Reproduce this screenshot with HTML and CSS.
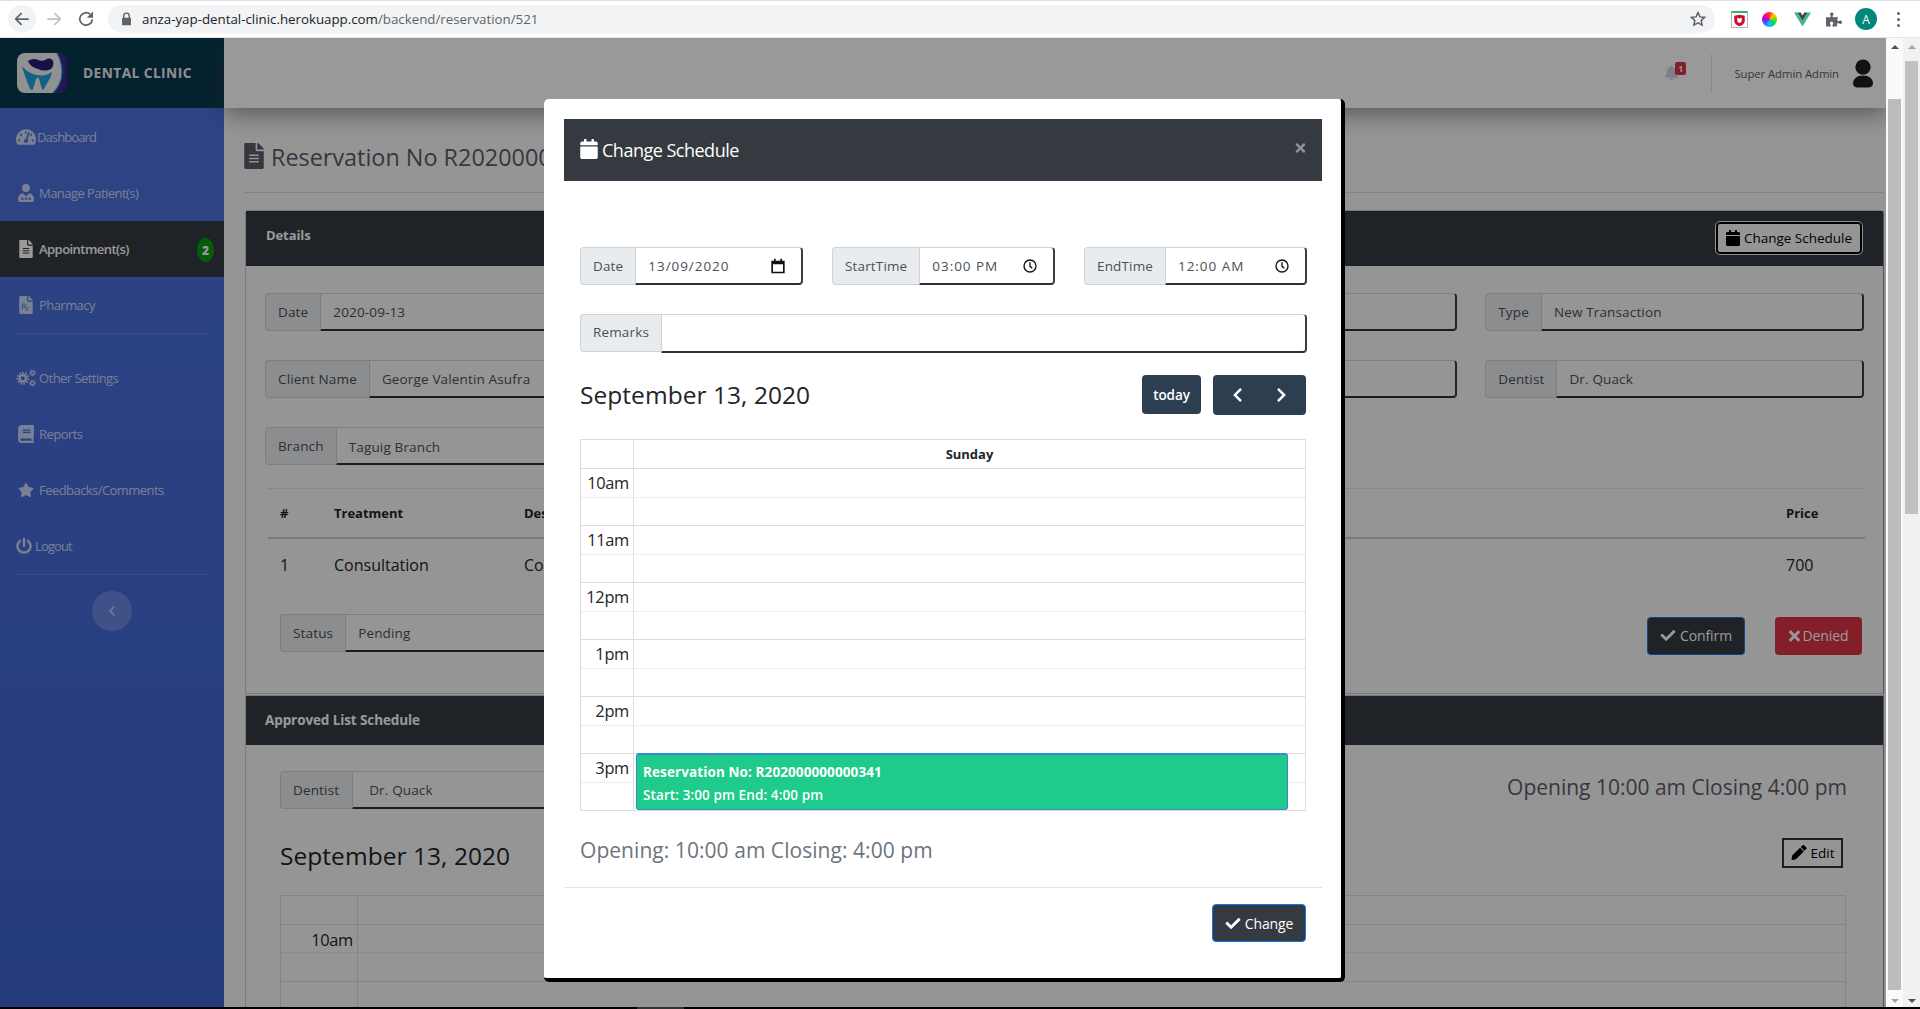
FILE: index.html
```html
<!DOCTYPE html>
<html lang="en">
<head>
<meta charset="utf-8">
<title>Reservation</title>
<link rel="stylesheet" href="styles.css">
</head>
<body>
<svg class="sprite" aria-hidden="true">
  <symbol id="i-check" viewBox="0 0 512 512"><path d="M173.898 439.404l-166.4-166.4c-9.997-9.997-9.997-26.206 0-36.204l36.203-36.204c9.997-9.998 26.207-9.998 36.204 0L192 312.69 432.095 72.596c9.997-9.997 26.207-9.997 36.204 0l36.203 36.204c9.997 9.997 9.997 26.206 0 36.204l-294.4 294.401c-9.998 9.997-26.207 9.997-36.204-.001z"/></symbol>
  <symbol id="i-times" viewBox="0 0 352 512"><path d="M242.72 256l100.07-100.07c12.28-12.28 12.28-32.19 0-44.48l-22.24-22.24c-12.28-12.28-32.19-12.28-44.48 0L176 189.28 75.93 89.21c-12.28-12.28-32.19-12.28-44.48 0L9.21 111.45c-12.28 12.28-12.28 32.19 0 44.48L109.28 256 9.21 356.07c-12.28 12.28-12.28 32.19 0 44.48l22.24 22.24c12.28 12.28 32.2 12.28 44.48 0L176 322.72l100.07 100.07c12.28 12.28 32.2 12.28 44.48 0l22.24-22.24c12.28-12.28 12.28-32.19 0-44.48L242.72 256z"/></symbol>
  <symbol id="i-calendar" viewBox="0 0 448 512"><path d="M12 192h424c6.6 0 12 5.4 12 12v260c0 26.5-21.5 48-48 48H48c-26.5 0-48-21.5-48-48V204c0-6.6 5.4-12 12-12zm436-44v-36c0-26.5-21.5-48-48-48h-48V12c0-6.6-5.4-12-12-12h-40c-6.6 0-12 5.4-12 12v52H160V12c0-6.6-5.4-12-12-12h-40c-6.6 0-12 5.4-12 12v52H48C21.5 64 0 85.5 0 112v36c0 6.6 5.4 12 12 12h424c6.6 0 12-5.4 12-12z"/></symbol>
  <symbol id="i-file" viewBox="0 0 384 512"><path d="M224 136V0H24C10.7 0 0 10.7 0 24v464c0 13.3 10.7 24 24 24h336c13.3 0 24-10.7 24-24V160H248c-13.2 0-24-10.8-24-24zm64 236c0 6.6-5.4 12-12 12H108c-6.6 0-12-5.4-12-12v-8c0-6.6 5.4-12 12-12h168c6.6 0 12 5.4 12 12v8zm0-64c0 6.6-5.4 12-12 12H108c-6.6 0-12-5.4-12-12v-8c0-6.6 5.4-12 12-12h168c6.6 0 12 5.4 12 12v8zm0-72v8c0 6.6-5.4 12-12 12H108c-6.6 0-12-5.4-12-12v-8c0-6.6 5.4-12 12-12h168c6.6 0 12 5.4 12 12zm96-114.1v6.1H256V0h6.1c6.4 0 12.5 2.5 17 7l97.9 98c4.5 4.5 7 10.6 7 16.9z"/></symbol>
  <symbol id="i-rx" viewBox="0 0 384 512"><path d="M224 136V0H24C10.7 0 0 10.7 0 24v464c0 13.3 10.7 24 24 24h336c13.3 0 24-10.7 24-24V160H248c-13.2 0-24-10.8-24-24zm160-14.1v6.1H256V0h6.1c6.4 0 12.5 2.5 17 7l97.9 98c4.5 4.5 7 10.6 7 16.9z"/><path class="rx-mark" d="M90 230h70a38 38 0 0 1 0 76h-70zm0 76v74m50-74l110 120m-50-46l60-70"/></symbol>
  <symbol id="i-star" viewBox="0 0 576 512"><path d="M259.3 17.8L194 150.2 47.9 171.5c-26.2 3.8-36.7 36.1-17.7 54.6l105.7 103-25 145.5c-4.5 26.3 23.2 46 46.4 33.7L288 439.6l130.7 68.7c23.2 12.2 50.9-7.4 46.4-33.7l-25-145.5 105.7-103c19-18.5 8.5-50.8-17.7-54.6L382 150.2 316.7 17.8c-11.7-23.6-45.6-23.9-57.4 0z"/></symbol>
  <symbol id="i-power" viewBox="0 0 512 512"><path d="M400 54.1c63 45 104 118.6 104 201.9 0 136.8-110.8 247.7-247.5 248C120 504.3 8.2 393 8 256.4 7.9 173.1 48.9 99.3 111.8 54.2c11.7-8.3 28-4.8 35 7.7L162.6 90c5.9 10.5 3.1 23.8-6.6 31-41.5 30.8-68 79.6-68 134.9-.1 92.3 74.5 168.1 168 168.1 91.6 0 168.6-74.2 168-169.1-.3-51.8-24.7-101.8-68.1-134-9.7-7.2-12.4-20.5-6.5-30.9l15.8-28.1c7-12.4 23.2-16.1 34.8-7.8zM296 264V24c0-13.3-10.7-24-24-24h-32c-13.3 0-24 10.7-24 24v240c0 13.3 10.7 24 24 24h32c13.3 0 24-10.7 24-24z"/></symbol>
  <symbol id="i-pencil" viewBox="0 0 512 512"><path d="M497.9 142.1l-46.1 46.1c-4.7 4.7-12.3 4.7-17 0l-111-111c-4.7-4.7-4.7-12.3 0-17l46.1-46.1c18.7-18.7 49.1-18.7 67.9 0l60.1 60.1c18.8 18.7 18.8 49.1 0 67.9zM284.2 99.8L21.6 362.4.4 483.9c-2.9 16.4 11.4 30.6 27.8 27.8l121.5-21.3 262.6-262.6c4.7-4.7 4.7-12.3 0-17l-111-111c-4.8-4.7-12.4-4.7-17.1 0z"/></symbol>
  <symbol id="i-bell" viewBox="0 0 448 512"><path d="M224 512c35.32 0 63.97-28.65 63.97-64H160.03c0 35.35 28.65 64 63.97 64zm215.39-149.71c-19.32-20.76-55.47-51.99-55.47-154.29 0-77.7-54.48-139.9-127.94-155.16V32c0-17.67-14.32-32-31.98-32s-31.98 14.33-31.98 32v20.84C118.56 68.1 64.08 130.3 64.08 208c0 102.3-36.15 133.53-55.47 154.29-6 6.45-8.66 14.16-8.61 21.71.11 16.4 12.98 32 32.1 32h383.8c19.12 0 32-15.6 32.1-32 .05-7.55-2.61-15.26-8.61-21.71z"/></symbol>
  <symbol id="i-left" viewBox="0 0 320 512"><path d="M34.52 239.03L228.87 44.69c9.37-9.37 24.57-9.37 33.94 0l22.67 22.67c9.36 9.36 9.37 24.52.04 33.9L131.49 256l154.02 154.75c9.34 9.38 9.32 24.54-.04 33.9l-22.67 22.67c-9.37 9.37-24.57 9.37-33.94 0L34.52 272.97c-9.37-9.37-9.37-24.57 0-33.94z"/></symbol>
  <symbol id="i-right" viewBox="0 0 320 512"><path d="M285.476 272.971L91.132 467.314c-9.373 9.373-24.569 9.373-33.941 0l-22.667-22.667c-9.357-9.357-9.375-24.522-.04-33.901L188.505 256 34.484 101.255c-9.335-9.379-9.317-24.544.04-33.901l22.667-22.667c9.373-9.373 24.569-9.373 33.941 0L285.475 239.03c9.373 9.372 9.373 24.568.001 33.941z"/></symbol>
  <symbol id="i-book" viewBox="0 0 448 512"><path d="M448 360V24c0-13.3-10.7-24-24-24H96C43 0 0 43 0 96v320c0 53 43 96 96 96h328c13.3 0 24-10.7 24-24v-16c0-7.5-3.5-14.3-8.9-18.7-4.2-15.4-4.2-59.3 0-74.7 5.4-4.3 8.9-11.1 8.9-18.6zM128 134c0-3.3 2.7-6 6-6h212c3.3 0 6 2.7 6 6v20c0 3.3-2.7 6-6 6H134c-3.3 0-6-2.7-6-6v-20zm0 64c0-3.3 2.7-6 6-6h212c3.3 0 6 2.7 6 6v20c0 3.3-2.7 6-6 6H134c-3.3 0-6-2.7-6-6v-20zm253.4 250H96c-17.7 0-32-14.3-32-32 0-17.6 14.4-32 32-32h285.4c-1.9 17.1-1.9 46.9 0 64z"/></symbol>
  <symbol id="i-gauge" viewBox="0 0 576 512"><path d="M288 32C128.94 32 0 160.94 0 320c0 52.8 14.25 102.26 39.06 144.8 5.61 9.62 16.3 15.2 27.44 15.2h443c11.14 0 21.83-5.58 27.44-15.2C561.75 422.26 576 372.8 576 320c0-159.06-128.94-288-288-288zm0 64c14.71 0 26.58 10.13 30.32 23.65-1.11 2.26-2.64 4.23-3.45 6.67l-9.22 27.67c-5.13 3.49-10.97 6.01-17.64 6.01-17.67 0-32-14.33-32-32S270.33 96 288 96zM96 384c-17.67 0-32-14.33-32-32s14.33-32 32-32 32 14.33 32 32-14.33 32-32 32zm48-160c-17.67 0-32-14.33-32-32s14.33-32 32-32 32 14.33 32 32-14.33 32-32 32zm246.77-72.41l-61.33 184C343.13 347.33 352 364.54 352 384c0 11.72-3.38 22.55-8.88 32H232.88c-5.5-9.45-8.88-20.28-8.88-32 0-33.94 26.5-61.43 59.9-63.59l61.34-184.01c4.17-12.56 17.73-19.45 30.36-15.17 12.57 4.19 19.35 17.79 15.17 30.36zm14.66 57.2l15.52-46.55c3.47-1.29 7.13-2.23 11.05-2.23 17.67 0 32 14.33 32 32s-14.33 32-32 32c-11.38-.01-20.89-6.28-26.57-15.22zM480 384c-17.67 0-32-14.33-32-32s14.33-32 32-32 32 14.33 32 32-14.33 32-32 32z"/></symbol>
  <symbol id="i-doctor" viewBox="0 0 448 512"><circle cx="224" cy="112" r="112"/><path d="M40 512c-22 0-40-18-40-40v-60c0-80 60-136 130-146l94 80 94-80c70 10 130 66 130 146v60c0 22-18 40-40 40z"/><circle class="cut" cx="120" cy="420" r="34"/><circle class="cut" cx="224" cy="420" r="34"/><circle class="cut" cx="328" cy="420" r="34"/></symbol>
  <symbol id="i-cogs" viewBox="0 0 600 512"><circle class="gear-teeth" cx="205" cy="265" r="165"/><circle class="gear-body" cx="205" cy="265" r="97.500"/><circle class="gear-teeth-s" cx="495" cy="105" r="82"/><circle class="gear-body-s" cx="495" cy="105" r="49"/><circle class="gear-teeth-s" cx="495" cy="410" r="82"/><circle class="gear-body-s" cx="495" cy="410" r="49"/></symbol>
  <symbol id="i-puzzle" viewBox="0 0 576 512"><path d="M519.442 288.651c-41.519 0-59.5 31.593-82.058 31.593C377.409 320.244 432 144 432 144s-196.288 80-196.288-3.297c0-35.827 36.288-46.25 36.288-85.985C272 19.216 243.885 0 210.539 0c-34.654 0-66.366 18.891-66.366 56.346 0 41.364 31.711 59.277 31.711 81.75C175.885 207.719 0 166.758 0 166.758v333.237s178.635 41.047 178.635-28.662c0-22.473-40-40.107-40-81.471 0-37.456 29.25-56.346 63.577-56.346 33.673 0 61.788 19.216 61.788 54.717 0 39.735-36.288 50.158-36.288 85.985 0 60.803 129.675 25.73 181.23 25.73 0 0-34.725-120.101 25.827-120.101 35.962 0 46.423 36.152 86.308 36.152C556.712 416 576 387.99 576 354.443c0-34.199-18.962-65.792-56.558-65.792z"/></symbol>
  <symbol id="i-user" viewBox="0 0 60 84"><ellipse cx="30" cy="23" rx="23" ry="23"/><path d="M0 72c0-14 12-24 30-24s30 10 30 24c0 8-7 12-14 12H14C7 84 0 80 0 72z"/></symbol>
  <symbol id="i-clock" viewBox="0 0 24 24"><circle class="line" cx="12" cy="12" r="9"/><path class="line" d="M12 6.500V12.500l3.500 3"/></symbol>
  <symbol id="i-cal-outline" viewBox="0 0 24 24"><path d="M6 1h2.500v3h7V1H18v3h4v19H2V4h4zM4.500 9.500v11h15v-11z"/></symbol>
</svg>

<header class="browser">
  <div class="nav-buttons">
    <span class="round-btn hover">
      <svg class="chrome-ico" viewBox="0 0 24 24"><path class="chrome-line" d="M20 12H5m6.500-7L4.500 12l7 7"/></svg>
    </span>
    <span class="round-btn">
      <svg class="chrome-ico faded" viewBox="0 0 24 24"><path class="chrome-line" d="M4 12h15m-6.500-7l7 7-7 7"/></svg>
    </span>
    <span class="round-btn">
      <svg class="chrome-ico" viewBox="0 0 24 24"><path class="chrome-line" d="M19.500 12.500A7.500 7.500 0 1 1 17 6.300"/><path class="chrome-fill" d="M20.500 3v7.500H13z"/></svg>
    </span>
  </div>
  <div class="address">
    <svg class="lock" viewBox="0 0 16 20"><path d="M3 8V5.500a5 5 0 0 1 10 0V8h1.500v11h-13V8zm2 0h6V5.500a3 3 0 0 0-6 0z"/></svg>
    <span class="url">anza-yap-dental-clinic.herokuapp.com<span class="url-path">/backend/reservation/521</span></span>
    <svg class="bookmark" viewBox="0 0 24 24"><path d="M12 3.500l2.600 5.700 6.200.7-4.600 4.200 1.300 6.100L12 17.200l-5.500 3 1.300-6.100L3.200 9.900l6.200-.7z"/></svg>
  </div>
  <div class="extensions">
    <span class="ext-shield"><svg viewBox="0 0 16 16"><path class="mcafee" d="M2 3l6-1 6 1v6c0 3-3 5-6 6-3-1-6-3-6-6z"/><path class="mcafee-in" d="M5.500 5v4c0 1 1.500 2 2.500 2.500 1-.5 2.500-1.500 2.500-2.500V5l-2.500 1.500z"/></svg></span>
    <span class="ext-wheel"></span>
    <svg class="ext-vue" viewBox="0 0 24 20"><path class="vue-green" d="M0 0h5l7 12L19 0h5L12 20z"/><path class="vue-navy" d="M5 0h4.500L12 4.500 14.500 0H19l-7 12z"/></svg>
    <svg class="ext-puzzle"><use href="#i-puzzle"/></svg>
    <span class="avatar">A</span>
    <span class="dots"><i></i><i></i><i></i></span>
  </div>
</header>

<div class="viewport">
  <div class="page">
    <aside class="sidebar">
      <div class="brand">
        <svg class="logo" viewBox="0 0 50 40">
          <rect class="logo-bg" width="48" height="40" rx="8"/>
          <path class="logo-edge" d="M42 0a8 8 0 0 1 8 8v24a8 8 0 0 1-8 8h-6c6-6 9-14 9-21 0-7-2-14-5-19z"/>
          <path class="logo-arc" d="M40 0c4 7 5 12 5 19 0 7-3 15-9 21"/>
          <path class="logo-navy" d="M11 8c3-2 7-3 10-1 3 1 6 1 9-1 3-1 5 0 6 2 1 3 0 6-2 8-5 2-9 2-13 0-4-1-8-3-10-8z"/>
          <path class="logo-blue" d="M5 13c4 5 9 8 15 9 6 1 11 0 15-3-1 6-4 9-8 17-1 1-2 1-2 0l-3-10c-1-2-2-2-3 0l-3 10c0 1-2 1-3 0-3-8-6-15-8-23z"/>
        </svg>
        <span class="brand-name">DENTAL CLINIC</span>
      </div>
      <nav class="nav">
        <a class="nav-item tight"><svg class="nav-ico wide"><use href="#i-gauge"/></svg><span>Dashboard</span></a>
        <a class="nav-item"><svg class="nav-ico"><use href="#i-doctor"/></svg><span>Manage Patient(s)</span></a>
        <a class="nav-item active"><svg class="nav-ico"><use href="#i-file"/></svg><span>Appointment(s)</span><b class="count">2</b></a>
        <a class="nav-item"><svg class="nav-ico"><use href="#i-rx"/></svg><span>Pharmacy</span></a>
        <hr class="nav-rule nav-rule-gap">
        <a class="nav-item"><svg class="nav-ico wide"><use href="#i-cogs"/></svg><span>Other Settings</span></a>
        <a class="nav-item"><svg class="nav-ico"><use href="#i-book"/></svg><span>Reports</span></a>
        <a class="nav-item"><svg class="nav-ico"><use href="#i-star"/></svg><span>Feedbacks/Comments</span></a>
        <a class="nav-item tight logout"><svg class="nav-ico"><use href="#i-power"/></svg><span>Logout</span></a>
        <hr class="nav-rule">
        <button class="collapse"><svg class="collapse-ico"><use href="#i-left"/></svg></button>
      </nav>
    </aside>

    <div class="main">
      <div class="topbar">
        <span class="bell"><svg class="bell-ico"><use href="#i-bell"/></svg><b class="bell-badge">1</b></span>
        <span class="top-divider"></span>
        <span class="user-name">Super Admin Admin</span>
        <svg class="user-ico"><use href="#i-user"/></svg>
      </div>
      <div class="content">
        <div class="page-title">
          <svg class="title-ico"><use href="#i-file"/></svg>
          <h1>Reservation No R2020000</h1>
        </div>

        <section class="card">
          <div class="card-head">
            <strong>Details</strong>
            <button class="btn-outline"><svg class="ico-md"><use href="#i-calendar"/></svg>Change Schedule</button>
          </div>
          <div class="details-body">
            <div class="field-grid">
              <div class="group span-2"><span class="addon">Date</span><span class="value">2020-09-13</span></div>
              <div class="group"><span class="addon">Time</span><span class="value"></span></div>
              <div class="group"><span class="addon">Type</span><span class="value">New Transaction</span></div>
              <div class="group span-2"><span class="addon">Client Name</span><span class="value">George Valentin Asufra</span></div>
              <div class="group"><span class="addon">Email</span><span class="value"></span></div>
              <div class="group"><span class="addon">Dentist</span><span class="value">Dr. Quack</span></div>
              <div class="group span-2"><span class="addon">Branch</span><span class="value low">Taguig Branch</span></div>
            </div>
            <table class="items">
              <thead><tr><th class="c-num">#</th><th class="c-treat">Treatment</th><th class="c-desc">Description</th><th class="c-price">Price</th></tr></thead>
              <tbody><tr><td>1</td><td>Consultation</td><td>Consultation</td><td>700</td></tr></tbody>
            </table>
            <div class="status-row">
              <div class="group status-group"><span class="addon">Status</span><span class="value low">Pending</span></div>
              <div class="actions">
                <button class="btn btn-dark"><svg class="ico-sm"><use href="#i-check"/></svg>Confirm</button>
                <button class="btn btn-danger"><svg class="ico-x"><use href="#i-times"/></svg>Denied</button>
              </div>
            </div>
          </div>
        </section>

        <section class="card card-second">
          <div class="card-head card-head-short"><strong>Approved List Schedule</strong></div>
          <div class="approved-body">
            <div class="approved-top">
              <div class="group status-group dentist-group"><span class="addon">Dentist</span><span class="value low">Dr. Quack</span></div>
              <span class="hours">Opening 10:00 am Closing 4:00 pm</span>
            </div>
            <div class="approved-title">
              <h2 class="cal-title">September 13, 2020</h2>
              <button class="btn-edit"><svg class="ico-sm"><use href="#i-pencil"/></svg>Edit</button>
            </div>
            <div class="cal cal-wide">
              <div class="cal-head"><span class="axis"></span><span class="lane"></span></div>
              <div class="slot major"><span class="axis">10am</span><span class="lane"></span></div>
              <div class="slot"><span class="axis"></span><span class="lane"></span></div>
              <div class="slot major"><span class="axis"></span><span class="lane"></span></div>
            </div>
          </div>
        </section>
      </div>
    </div>

    <div class="backdrop"></div>

    <div class="modal">
      <div class="modal-head">
        <svg class="modal-cal"><use href="#i-calendar"/></svg>
        <h3>Change Schedule</h3>
        <svg class="modal-close"><use href="#i-times"/></svg>
      </div>
      <div class="modal-body">
        <div class="time-row">
          <div class="group"><span class="addon">Date</span><span class="value light picker">13/09/2020<svg class="picker-ico"><use href="#i-cal-outline"/></svg></span></div>
          <div class="group"><span class="addon">StartTime</span><span class="value light picker">03:00 PM<svg class="picker-ico"><use href="#i-clock"/></svg></span></div>
          <div class="group"><span class="addon">EndTime</span><span class="value light picker">12:00 AM<svg class="picker-ico"><use href="#i-clock"/></svg></span></div>
        </div>
        <div class="group remarks"><span class="addon">Remarks</span><span class="value light"></span></div>
        <div class="cal-toolbar">
          <h2 class="cal-title">September 13, 2020</h2>
          <div class="cal-buttons">
            <button class="fc-btn fc-today">today</button>
            <div class="fc-pair">
              <svg class="fc-chev"><use href="#i-left"/></svg>
              <svg class="fc-chev"><use href="#i-right"/></svg>
            </div>
          </div>
        </div>
        <div class="cal cal-modal">
          <div class="cal-head"><span class="axis"></span><span class="lane">Sunday</span></div>
          <div class="slot major"><span class="axis">10am</span><span class="lane"></span></div>
          <div class="slot"><span class="axis"></span><span class="lane"></span></div>
          <div class="slot major"><span class="axis">11am</span><span class="lane"></span></div>
          <div class="slot"><span class="axis"></span><span class="lane"></span></div>
          <div class="slot major"><span class="axis">12pm</span><span class="lane"></span></div>
          <div class="slot"><span class="axis"></span><span class="lane"></span></div>
          <div class="slot major"><span class="axis">1pm</span><span class="lane"></span></div>
          <div class="slot"><span class="axis"></span><span class="lane"></span></div>
          <div class="slot major"><span class="axis">2pm</span><span class="lane"></span></div>
          <div class="slot"><span class="axis"></span><span class="lane"></span></div>
          <div class="slot major"><span class="axis">3pm</span><span class="lane"></span></div>
          <div class="slot"><span class="axis"></span><span class="lane"></span></div>
          <div class="event">
            <strong>Reservation No: R202000000000341</strong>
            <span>Start: 3:00 pm End: 4:00 pm</span>
          </div>
        </div>
        <p class="modal-hours">Opening: 10:00 am Closing: 4:00 pm</p>
      </div>
      <div class="modal-foot">
        <button class="btn btn-dark btn-change"><svg class="ico-sm"><use href="#i-check"/></svg>Change</button>
      </div>
    </div>
  </div>

  <div class="scrollbar inner-bar">
    <i class="arrow up"></i>
    <i class="thumb"></i>
    <i class="arrow down"></i>
  </div>
  <div class="scrollbar outer-bar">
    <i class="arrow up faint"></i>
    <i class="thumb"></i>
    <i class="arrow down"></i>
  </div>
</div>
<div class="taskbar"><i class="taskbar-tab"></i></div>
</body>
</html>
```

FILE: styles.css
```css
* { box-sizing: border-box; }
html, body { margin: 0; height: 100%; }
body {
  width: 1920px;
  height: 1009px;
  overflow: hidden;
  display: flex;
  flex-direction: column;
  font-family: "Open Sans", "Noto Sans", sans-serif;
  font-size: 13.5px;
  color: #495057;
  background: #fff;
}
h1, h2, h3, p { margin: 0; font-weight: 400; }
button { font-family: inherit; cursor: pointer; }
svg { fill: currentColor; flex: none; }
.sprite { position: absolute; width: 0; height: 0; }

/* browser chrome */
.browser {
  height: 38px;
  flex: none;
  display: flex;
  align-items: center;
  background: #fff;
  border-top: 1px solid #dee1e6;
  border-bottom: 1px solid #e3e4e6;
  padding-left: 8px;
  font-family: "Open Sans", sans-serif;
}
.nav-buttons { display: flex; gap: 4px; }
.round-btn { width: 28px; height: 28px; border-radius: 50%; display: flex; align-items: center; justify-content: center; }
.round-btn.hover { background: #f1f3f4; }
.chrome-ico { width: 20px; height: 20px; color: #5f6368; }
.chrome-ico.faded { color: #bdc1c6; }
.chrome-line { fill: none; stroke: currentColor; stroke-width: 2.1; }
.chrome-fill { fill: currentColor; }
.address {
  margin-left: 8px;
  width: 1607px;
  height: 28px;
  border-radius: 14px;
  background: #f1f3f4;
  display: flex;
  align-items: center;
  padding-left: 13px;
}
.lock { width: 11px; height: 14px; color: #5f6368; }
.url { margin-left: 10px; font-size: 13.3px; color: #202124; flex: 1; white-space: nowrap; }
.url-path { color: #5f6368; }
.bookmark { width: 18px; height: 18px; fill: none; stroke: #5f6368; stroke-width: 2; margin-right: 8px; }
.extensions { display: flex; align-items: center; margin-left: 16px; position: relative; height: 28px; flex: 1; }
.ext-shield { width: 17px; height: 17px; border: 1px solid #b5b5b5; border-top: 2px solid #2fb96e; display: flex; margin-left: 0; }
.ext-shield svg { width: 100%; height: 100%; }
.mcafee { fill: #c8102e; }
.mcafee-in { fill: #fff; }
.ext-wheel { width: 15px; height: 15px; margin-left: 14px; border-radius: 50%; background: conic-gradient(#f33, #fc0, #6d0, #0c8, #0cf, #36f, #a0f, #f09, #f33); }
.ext-vue { width: 17px; height: 15px; margin-left: 17px; }
.vue-green { fill: #41b883; }
.vue-navy { fill: #35495e; }
.ext-puzzle { width: 16px; height: 15px; margin-left: 15px; color: #5f6368; }
.avatar { width: 22px; height: 22px; margin-left: 13px; border-radius: 50%; background: #00897b; color: #fff; font-size: 12px; display: flex; align-items: center; justify-content: center; }
.dots { display: flex; flex-direction: column; gap: 3px; margin-left: 20px; }
.dots i { width: 3px; height: 3px; border-radius: 50%; background: #5f6368; }

/* frame */
.viewport { flex: 1; min-height: 0; display: flex; }
.page { position: relative; width: 1886px; flex: none; display: flex; overflow: hidden; background: #f8f9fa; }
.taskbar { height: 2px; flex: none; background: #000; padding-left: 637px; }
.taskbar-tab { display: block; width: 47px; height: 2px; background: #333; }
.backdrop { position: absolute; inset: 0; background: rgba(0, 0, 0, .4); }

/* scrollbars */
.scrollbar { width: 17px; flex: none; display: flex; flex-direction: column; align-items: center; position: relative; }
.inner-bar { background: #fafafa; }
.outer-bar { background: #f1f1f1; }
.thumb { display: block; width: 13px; background: #bcbcbc; }
.inner-bar .thumb { margin-top: 50px; height: 891px; }
.outer-bar .thumb { margin-top: 12px; height: 453px; background: #c1c1c1; }
.arrow { display: block; width: 0; height: 0; border-left: 4px solid transparent; border-right: 4px solid transparent; margin-top: 7px; }
.arrow.up { border-bottom: 4px solid #505050; }
.arrow.up.faint { border-bottom-color: #a3a3a3; }
.arrow.down { border-top: 4px solid #505050; position: absolute; bottom: 4px; margin: 0; }
.inner-bar .arrow.down { border-top-color: #a3a3a3; }

/* sidebar */
.sidebar { width: 224px; flex: none; background: linear-gradient(180deg, #4e73df 0%, #3e63d2 100%); display: flex; flex-direction: column; color: rgba(255, 255, 255, .72); }
.brand { height: 70px; flex: none; background: #053a4e; display: flex; align-items: center; padding-left: 17px; }
.logo { width: 50px; height: 40px; }
.logo-bg { fill: #f2f2f2; }
.logo-edge { fill: #3a2a8a; }
.logo-arc { fill: none; stroke: #1fa3e0; stroke-width: 1.2; }
.logo-navy { fill: #2a1a7a; }
.logo-blue { fill: #1fa3e0; }
.brand-name { margin: -2px 0 0 16px; font-size: 13.7px; font-weight: 700; letter-spacing: .45px; color: #eee; white-space: nowrap; }
.nav { display: flex; flex-direction: column; padding-top: 1px; }
.nav-item { height: 56px; display: flex; align-items: center; padding-left: 17px; font-size: 13px; letter-spacing: -0.55px; position: relative; }
.nav-item.active { background: #343a40; color: #fff; font-weight: 600; }
.nav-ico { width: 16px; height: 18px; margin-right: 5px; margin-left: 1px; }
.nav-ico.wide { width: 20px; margin-left: -1px; margin-right: 3px; }
.nav-item.tight { letter-spacing: -.9px; }
.nav-item.tight .nav-ico { margin-right: 1px; margin-left: -1px; }
.nav-item.logout .nav-ico { margin-right: 3px; }
.count { position: absolute; right: 10px; top: 17px; width: 17px; height: 24px; border-radius: 50%; background: #0b9a14; color: #fff; font-size: 12px; display: flex; align-items: center; justify-content: center; letter-spacing: 0; }
.nav-rule { width: 192px; margin: 0 0 0 16px; border: 0; border-top: 1px solid rgba(255, 255, 255, .15); }
.nav-rule-gap { margin-bottom: 16px; }
.collapse { width: 40px; height: 40px; margin: 16px 0 0 92px; border-radius: 50%; border: 0; background: rgba(255, 255, 255, .2); color: rgba(255, 255, 255, .5); display: flex; align-items: center; justify-content: center; padding: 0; }
.collapse-ico { width: 8px; height: 12px; }
.cut { fill: #4e73df; }
.rx-mark { fill: none; stroke: #4e73df; stroke-width: 26; }
.gear-teeth { fill: none; stroke: currentColor; stroke-width: 60; stroke-dasharray: 50 42; }
.gear-body { fill: none; stroke: currentColor; stroke-width: 75; }
.gear-teeth-s { fill: none; stroke: currentColor; stroke-width: 32; stroke-dasharray: 30 24; }
.gear-body-s { fill: none; stroke: currentColor; stroke-width: 34; }

/* main */
.main { flex: 1; min-width: 0; display: flex; flex-direction: column; }
.topbar { height: 70px; flex: none; background: #fff; display: flex; align-items: center; justify-content: flex-end; padding-right: 13px; box-shadow: 0 6px 24px rgba(58, 59, 69, .55); position: relative; color: #858796; }
.bell { position: relative; width: 13px; height: 16px; margin-right: 33px; display: block; }
.bell-ico { width: 13px; height: 16px; color: #d1d3e2; display: block; }
.bell-badge { position: absolute; left: 10px; top: -3px; width: 11px; height: 13px; border-radius: 2px; background: #dc3545; color: #fff; font-size: 8px; line-height: 13px; text-align: center; }
.top-divider { width: 1px; height: 38px; background: #e3e6f0; margin-right: 22px; }
.user-name { font-size: 11.3px; letter-spacing: -.05px; color: #5a5c69; margin-right: 14px; }
.user-ico { width: 20px; height: 29px; color: #1e1e1e; }

.content { flex: 1; min-height: 0; padding: 0 2px 0 20px; overflow: hidden; }
.page-title { height: 85px; display: flex; align-items: flex-start; padding-top: 35px; border-bottom: 1px solid #d8dade; }
.title-ico { width: 20px; height: 26px; color: #5a5c69; margin-right: 7px; }
.page-title h1 { font-size: 23.4px; line-height: 28px; white-space: nowrap; color: #5a5c69; }

.card { margin: 17px 0 0 1px; border: 1px solid #c9cbcd; border-right-color: #8a8a8a; border-radius: 4px 4px 0 0; }
.card-second { margin-top: 1px; border-bottom: 0; border-radius: 0; }
.card-head { height: 55px; background: #343a40; color: #fff; display: flex; align-items: center; justify-content: space-between; padding: 0 20px 8px; }
.card-head strong { font-size: 13px; font-weight: 700; letter-spacing: -.1px; }
.card-head-short { height: 49px; padding: 0 20px 0 19px; }
.card-head-short strong { font-size: 13.5px; }
.btn-outline { width: 146px; height: 32px; margin: 7px 1px 0 0; background: #f8f9fa; border: 2px solid #000; outline: 1px solid #f0f0f0; border-radius: 4px; color: #000; font-size: 13.5px; display: flex; align-items: center; justify-content: center; padding: 0; white-space: nowrap; }
.ico-md { width: 14px; height: 16px; margin-right: 4px; }

.details-body { padding: 27px 19px 38px 19px; }
.field-grid { display: grid; grid-template-columns: repeat(4, 1fr); gap: 29px 28px; }
.span-2 { grid-column: span 2; }
.group { display: flex; height: 38px; min-width: 0; }
.addon { flex: none; display: flex; align-items: center; padding: 0 12px; background: #e9ecef; border: 1px solid #ced4da; border-right: 0; border-radius: 4px 0 0 4px; font-size: 13.5px; letter-spacing: .15px; color: #495057; white-space: nowrap; }
.value { flex: 1; min-width: 0; display: flex; align-items: center; padding: 0 12px; border: 1px solid #ced4da; border-right: 2px solid #3a3f44; border-bottom: 2px solid #2c3035; border-radius: 0 4px 4px 0; font-size: 13.5px; letter-spacing: .15px; color: #495057; white-space: nowrap; position: relative; }
.value.low { padding-top: 2px; }
.value.light { background: #fff; }
.value.picker { letter-spacing: .95px; }

.items { width: 1597px; margin: 23px 0 0 3px; border-collapse: collapse; table-layout: fixed; color: #212529; border-top: 1px solid #dee2e6; }
.items th { height: 49px; padding: 0 12px; border-bottom: 2px solid #c8ccd0; font-size: 13px; text-align: left; font-weight: 700; }
.items td { height: 54px; padding: 0 12px; font-size: 16px; letter-spacing: 0; }
.c-num { width: 54px; }
.c-treat { width: 190px; }
.c-desc { width: 1262px; }
.c-price { width: 91px; }
.status-row { display: flex; justify-content: space-between; margin: 22px 0 0 15px; }
.status-group { width: 400px; }
.actions { display: flex; gap: 30px; margin: 3px 2px 0 0; }
.btn { height: 38px; border-radius: 4px; border: 1px solid transparent; color: #fff; font-size: 14px; letter-spacing: -.1px; padding: 0; display: flex; align-items: center; justify-content: center; white-space: nowrap; }
.btn-dark { width: 98px; background: #343a40; border-color: #0a7bf0; }
.btn-danger { width: 87px; background: #dc3545; }
.ico-sm { width: 16px; height: 15px; margin-right: 4px; }
.ico-x { width: 11px; height: 16px; margin-right: 3px; }

.approved-body { padding: 26px 36px 0 34px; }
.approved-top { display: flex; justify-content: space-between; align-items: flex-start; }
.dentist-group .addon { padding-right: 13px; }
.dentist-group .value { padding-left: 16px; }
.hours { font-size: 21px; line-height: 30px; margin-top: 1px; color: #5a5c69; }
.approved-title { display: flex; justify-content: space-between; align-items: center; margin-top: 29px; padding-right: 4px; height: 30px; }
.cal-title { font-size: 24.5px; line-height: 30px; letter-spacing: .05px; color: #212529; white-space: nowrap; }
.approved-title .cal-title { position: relative; top: 3px; }
.btn-edit { width: 61px; height: 30px; background: #f8f9fa; border: 2px solid #333; color: #000; font-size: 13.5px; display: flex; align-items: center; justify-content: center; padding: 0; }
.btn-edit .ico-sm { width: 16px; }

.cal { border: 1px solid #ddd; border-bottom: 0; color: #212529; position: relative; }
.cal-wide { margin: 27px 1px 0 0; height: 200px; }
.cal-head { height: 29px; display: flex; border-bottom: 1px solid #ddd; }
.cal-head .lane { flex: 1; text-align: center; font-size: 13px; font-weight: 700; line-height: 28px; border-bottom: 0; }
.slot { height: 28.5px; display: flex; border-bottom: 1px dotted #ddd; }
.slot:nth-child(odd) { border-bottom: 1px solid #ddd; }
.slot .lane { flex: 1; }
.axis { width: 53px; flex: none; border-right: 1px solid #ddd; text-align: right; padding-right: 4px; font-size: 16.4px; letter-spacing: -.3px; line-height: 28px; }
.cal-wide .axis { width: 77px; line-height: 30px; }

/* modal */
.modal { position: absolute; left: 544px; top: 61px; width: 801px; height: 883px; background: #fff; border-radius: 5px; border-right: 4px solid #000; border-bottom: 4px solid #000; padding: 20px 19px 0 20px; display: flex; flex-direction: column; }
.modal-head { height: 62px; flex: none; background: #343a40; color: #fff; display: flex; align-items: center; padding: 0 16px; position: relative; }
.modal-cal { width: 18px; height: 20px; margin-right: 4px; margin-top: -2px; }
.modal-head h3 { font-size: 18px; letter-spacing: -.5px; line-height: 1; }
.modal-close { width: 11px; height: 14px; color: #8f9295; margin-left: auto; margin-top: -4px; }
.modal-body { padding: 66px 15px 0 16px; }
.time-row { display: grid; grid-template-columns: repeat(3, 223px); column-gap: 29px; }
.remarks { margin-top: 29px; height: 39px; }
.remarks .addon { padding-bottom: 2px; height: 38px; }
.picker-ico { position: absolute; right: 15px; top: 10px; width: 16px; height: 16px; color: #111; }
.line { fill: none; stroke: currentColor; stroke-width: 2; }
.cal-toolbar { display: flex; justify-content: space-between; align-items: center; margin: 22px 1px 0 0; height: 40px; }
.cal-buttons { display: flex; gap: 12px; }
.fc-btn { border: 0; height: 39px; border-radius: 4px; background: #2c3e50; color: #fff; font-size: 13.5px; font-weight: 600; letter-spacing: -.1px; padding: 0; }
.fc-today { width: 59px; }
.fc-pair { width: 93px; height: 40px; border-radius: 4px; background: #2c3e50; color: #fff; display: flex; align-items: center; justify-content: space-between; padding: 0 19px 0 19px; }
.fc-chev { width: 11px; height: 16px; }
.cal-modal { margin: 24px 1px 0 0; border-bottom: 0; }
.event { position: absolute; left: 55px; top: 313px; width: 652px; height: 57px; background: #1ecb8b; border: 1px solid #3788d8; border-top-width: 2px; border-radius: 3px; color: #fff; font-size: 13.5px; letter-spacing: .1px; padding: 9px 5px 0 6px; display: flex; flex-direction: column; gap: 7px; line-height: 16px; }
.event strong { font-weight: 700; }
.event span { font-weight: 600; }
.modal-hours { margin-top: 24px; font-size: 21px; letter-spacing: .05px; line-height: 30px; color: #6c757d; }
.modal-foot { margin-top: 22px; border-top: 1px solid #e3e3e3; padding: 16px 16px 0 0; display: flex; justify-content: flex-end; }
.btn-change { width: 94px; }
```
